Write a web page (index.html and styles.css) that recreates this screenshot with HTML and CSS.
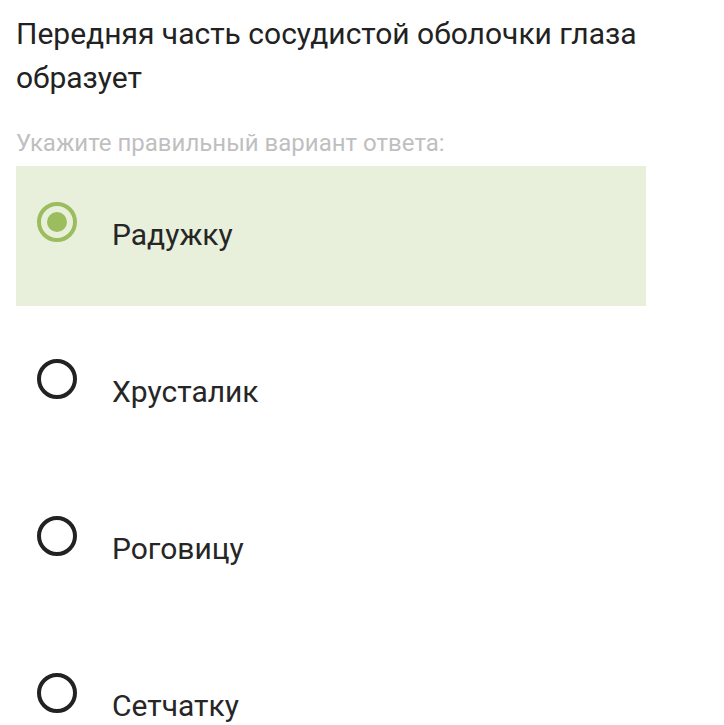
FILE: index.html
```html
<!DOCTYPE html>
<html lang="ru">
<head>
<meta charset="utf-8">
<link rel="stylesheet" href="styles.css">
</head>
<body>
<div class="page">
  <h1 class="question">Передняя часть сосудистой оболочки глаза образует</h1>
  <p class="hint">Укажите правильный вариант ответа:</p>
  <ul class="options">
    <li class="option selected"><span class="radio"></span><span class="label">Радужку</span></li>
    <li class="option"><span class="radio"></span><span class="label">Хрусталик</span></li>
    <li class="option"><span class="radio"></span><span class="label">Роговицу</span></li>
    <li class="option"><span class="radio"></span><span class="label">Сетчатку</span></li>
  </ul>
</div>
</body>
</html>
```
FILE: styles.css
```css
html, body {
  margin: 0;
  padding: 0;
  background: #ffffff;
}
.page {
  padding: 12px 0 0 16px;
  width: 630px;
  font-family: Roboto, "Noto Sans", sans-serif;
  color: #262626;
}
.question {
  margin: 0;
  font-size: 30px;
  font-weight: 400;
  line-height: 44px;
  color: #222;
}
.hint {
  margin: 28px 0 0 0;
  font-size: 24px;
  line-height: 30px;
  color: #bfbfbf;
}
.options {
  list-style: none;
  margin: 8px 0 0 0;
  padding: 0;
  display: flex;
  flex-direction: column;
  gap: 17px;
}
.option {
  height: 140px;
  display: flex;
  align-items: flex-start;
  padding-left: 21px;
  box-sizing: border-box;
}
.option.selected {
  background: #e8f0dc;
}
.radio {
  width: 40px;
  height: 40px;
  margin-top: 36px;
  border: 4px solid #222;
  border-radius: 50%;
  box-sizing: border-box;
  flex: none;
  position: relative;
}
.selected .radio {
  border-color: #9bbd5e;
}
.selected .radio::after {
  content: "";
  position: absolute;
  left: 6px;
  top: 6px;
  width: 20px;
  height: 20px;
  border-radius: 50%;
  background: #9bbd5e;
}
.label {
  margin-left: 35px;
  margin-top: 52px;
  font-size: 30px;
  line-height: 34px;
  color: #262626;
}
```
